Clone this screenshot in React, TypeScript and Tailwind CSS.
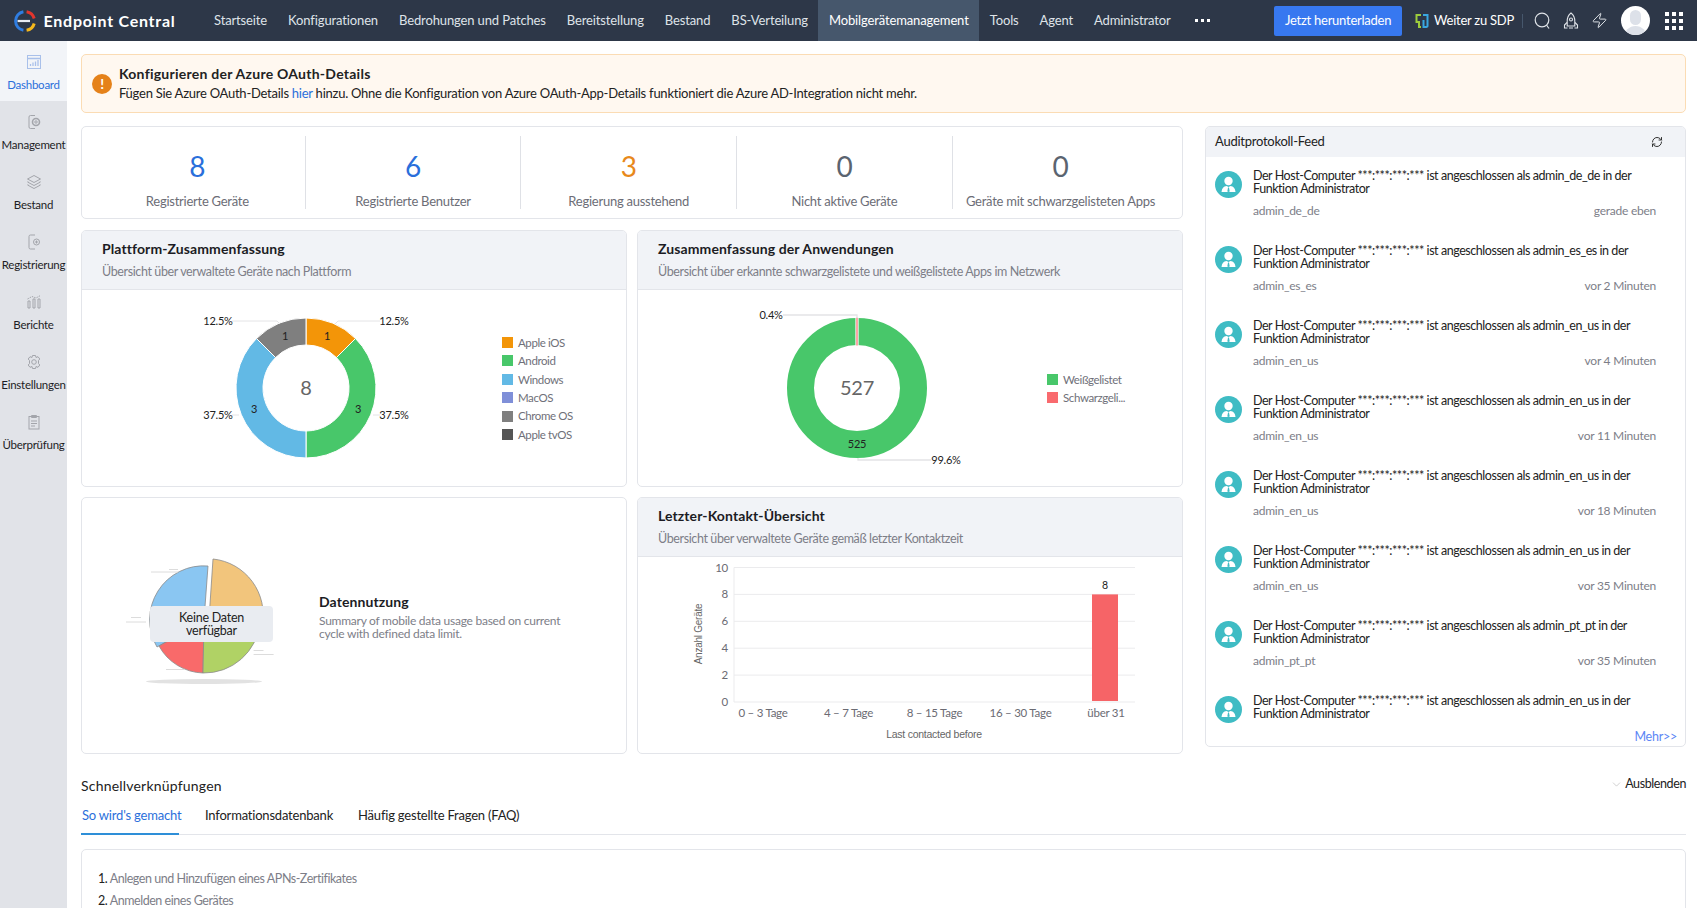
import { RefreshCw, Zap, ChevronDown } from 'lucide-react'

const NAV = ['Startseite', 'Konfigurationen', 'Bedrohungen und Patches', 'Bereitstellung', 'Bestand', 'BS-Verteilung', 'Mobilgerätemanagement', 'Tools', 'Agent', 'Administrator']

const FEED = [
  { user: 'admin_de_de', time: 'gerade eben' },
  { user: 'admin_es_es', time: 'vor 2 Minuten' },
  { user: 'admin_en_us', time: 'vor 4 Minuten' },
  { user: 'admin_en_us', time: 'vor 11 Minuten' },
  { user: 'admin_en_us', time: 'vor 18 Minuten' },
  { user: 'admin_en_us', time: 'vor 35 Minuten' },
  { user: 'admin_pt_pt', time: 'vor 35 Minuten' },
  { user: 'admin_en_us', time: '' },
]

const STATS = [
  { value: '8', label: 'Registrierte Geräte', color: 'text-[#2a6fdb]' },
  { value: '6', label: 'Registrierte Benutzer', color: 'text-[#2a6fdb]' },
  { value: '3', label: 'Regierung ausstehend', color: 'text-[#e8891b]' },
  { value: '0', label: 'Nicht aktive Geräte', color: 'text-[#5b6470]' },
  { value: '0', label: 'Geräte mit schwarzgelisteten Apps', color: 'text-[#5b6470]' },
]

function Logo() {
  return (
    <svg width="23" height="22" viewBox="0 0 23 22" fill="none" className="shrink-0">
      <path d="M3.500 11H16" stroke="#e9edf2" strokeWidth="2.200" />
      <path d="M9.400 20.350 A9.500 9.500 0 0 1 9.400 1.650" stroke="#2f7de1" strokeWidth="3" />
      <path d="M12.600 1.650 A9.500 9.500 0 0 1 20.200 8.500" stroke="#e2352d" strokeWidth="3" />
      <path d="M20.200 13.500 A9.500 9.500 0 0 1 12.600 20.350" stroke="#f5b81c" strokeWidth="3" />
    </svg>
  )
}

function SideIcon({ name, active }: { name: string; active?: boolean }) {
  const s = active ? '#a9c0ea' : '#a3a5ab'
  const common = { width: 20, height: 20, viewBox: '0 0 20 20', fill: 'none', stroke: s, strokeWidth: 1 }
  if (name === 'Dashboard') return (
    <svg {...common}>
      <rect x="3.5" y="3.5" width="13" height="13" />
      <path d="M3.5 6.5H16.5M6.5 14V12M9 14V10.5M11.5 14V9.5M14 14V8" strokeWidth="1.3" />
    </svg>
  )
  if (name === 'Management') return (
    <svg {...common}>
      <path d="M11 3.5H6.5Q5 3.5 5 5V15Q5 16.500 6.500 16.500H11" />
      <circle cx="12" cy="10" r="3.500" strokeWidth="1.600" />
      <circle cx="12" cy="10" r="1.200" />
    </svg>
  )
  if (name === 'Bestand') return (
    <svg {...common}>
      <path d="M10 3.500L16.500 7L10 10.500L3.500 7Z" />
      <path d="M4 9.500L3.500 10L10 13.500L16.500 10L16 9.500" />
      <path d="M4 12.500L3.500 13L10 16.500L16.500 13L16 12.500" />
    </svg>
  )
  if (name === 'Registrierung') return (
    <svg {...common}>
      <path d="M11 3H6.500Q5 3 5 4.500V15.500Q5 17 6.500 17H11" />
      <circle cx="12.500" cy="10" r="3" />
      <path d="M12.500 8.500V11.500M11 10H14" />
    </svg>
  )
  if (name === 'Berichte') return (
    <svg {...common}>
      <path d="M4 16V9H6V16ZM9 16V7H11V16ZM14 16V7H16V16Z" />
      <path d="M3.500 7L8 4.500L12 6L16.500 3.500" strokeDasharray="1.500 1" />
    </svg>
  )
  if (name === 'Einstellungen') return (
    <svg {...common}>
      <path d="M8.500 3.500H11.500L12 5.500L14 4.700L15.800 7L14.500 8.500V11.500L15.800 13L14 15.300L12 14.500L11.500 16.500H8.500L8 14.500L6 15.300L4.200 13L5.500 11.500V8.500L4.200 7L6 4.700L8 5.500Z" />
      <circle cx="10" cy="10" r="2.300" />
    </svg>
  )
  return (
    <svg {...common}>
      <rect x="5" y="4.500" width="10" height="12.500" />
      <path d="M7.500 3.500H12.500V5.500H7.500ZM7 9H13M7 11.500H13M7 14H11" />
    </svg>
  )
}

function Avatar() {
  return (
    <svg width="27" height="27" viewBox="0 0 27 27" className="shrink-0 mt-[2px]">
      <circle cx="13.500" cy="13.500" r="13.500" fill="#3fbcc4" />
      <circle cx="13.500" cy="10" r="4.200" fill="#fff" />
      <path d="M6.500 21 Q7 15.500 11.500 15 L13.500 16 L15.500 15 Q20 15.500 20.500 21 Z" fill="#fff" />
      <path d="M13 16.500 H14 L14.700 20.500 L13.500 21 L12.300 20.500 Z" fill="#3fbcc4" />
    </svg>
  )
}

function CardHead({ title, sub }: { title: string; sub: string }) {
  return (
    <div className="h-[59px] bg-[#f1f3f7] border-b border-[#e3e5ea] pl-[20px] pt-[9px]">
      <h3 className="text-[14px] leading-[18px] font-bold tracking-[0.100px] text-[#1c1c24]">{title}</h3>
      <p className="text-[12.500px] leading-[16px] mt-[6px] tracking-[-0.380px] text-[#7d7e88]">{sub}</p>
    </div>
  )
}

function Legend({ items }: { items: [string, string][] }) {
  return (
    <div className="flex flex-col gap-[4.400px]">
      {items.map(([name, color]) => (
        <div key={name} className="flex items-center gap-[5px] h-[14px] text-[11.500px] tracking-[-0.400px] text-[#6f7079] whitespace-nowrap">
          <span className="w-[11px] h-[11px]" style={{ background: color }} />
          {name}
        </div>
      ))}
    </div>
  )
}

const lead = '#e4e4e6'

function PlatformDonut() {
  // slice angles are worked out from the counts, 8 devices in total
  const cx = 116, cy = 99, R = 70, r = 43
  const slices: [number, number, string][] = [[0, 45, '#f39508'], [45, 180, '#48c76a'], [180, 315, '#62b9e5'], [315, 360, '#7f7f7f']]
  const pt = (rad: number, a: number) => {
    const t = (a * Math.PI) / 180
    return `${(cx + rad * Math.sin(t)).toFixed(2)} ${(cy - rad * Math.cos(t)).toFixed(2)}`
  }
  return (
    <svg width="240" height="198" viewBox="0 1 240 198" className="shrink-0">
      {slices.map(([a, b, c]) => (
        <path key={a} fill={c} stroke="#fff" strokeWidth="1" d={`M${pt(r, a)} L${pt(R, a)} A${R} ${R} 0 0 1 ${pt(R, b)} L${pt(r, b)} A${r} ${r} 0 0 0 ${pt(r, a)} Z`} />
      ))}
      <path d="M42 32H87L90 35M145 35L148 32H190M42 126H49M183 126H190" stroke={lead} fill="none" />
      <g fontSize="11" fill="#222" textAnchor="middle">
        <text x="28" y="36">12.5%</text>
        <text x="204" y="36">12.5%</text>
        <text x="28" y="130">37.5%</text>
        <text x="204" y="130">37.5%</text>
        <text x="95" y="51">1</text>
        <text x="137" y="51">1</text>
        <text x="64" y="124">3</text>
        <text x="168" y="124">3</text>
      </g>
      <text x="116" y="106" fontSize="20" fill="#666" textAnchor="middle">8</text>
    </svg>
  )
}

function AppDonut() {
  return (
    <svg width="240" height="198" viewBox="0 1 240 198" className="shrink-0">
      <circle cx="118" cy="99" r="56.500" fill="none" stroke="#48c76a" strokeWidth="27" />
      <rect x="116.400" y="28.500" width="3.200" height="28" fill="#fff" />
      <rect x="117.400" y="28.500" width="1.200" height="28" fill="#f96a6e" />
      <path d="M44 26H118V29M119 169V171H192" stroke={lead} fill="none" strokeWidth="1.300" />
      <text x="32" y="30" fontSize="11" fill="#222" textAnchor="middle">0.4%</text>
      <text x="207" y="175" fontSize="11" fill="#222" textAnchor="middle">99.6%</text>
      <text x="118" y="159" fontSize="11" fill="#222" textAnchor="middle">525</text>
      <text x="118" y="106" fontSize="20" fill="#666" textAnchor="middle">527</text>
    </svg>
  )
}

function NoDataPie() {
  return (
    <div className="relative w-[167px] h-[132px] shrink-0">
      <svg width="175" height="135" viewBox="0 0 175 135" className="overflow-visible">
        <g stroke="#8a8a8a" strokeWidth="0.800">
          <path d="M57 68 L61 8 A56 56 0 0 1 110 75 Z" fill="#f2c57c" />
          <path d="M52 69 L56 15 A54 54 0 0 0 5 96 Z" fill="#8ac6f2" />
          <path d="M52 70 L51 122 A52 52 0 0 1 7 95 Z" fill="#f96a6a" />
          <path d="M52 70 L108 72 A56 56 0 0 1 51 122 Z" fill="#b0d265" />
        </g>
        <ellipse cx="52" cy="130.500" rx="58" ry="2.500" fill="#e2e2e2" />
        <path d="M-1 21H26M17 18.500H26M-26 71H-6M-21 66.500H-11M101.600 103.500H121.600M101.600 99.500H111.500M14 118.500H32.500" stroke="#dcdcdc" fill="none" />
      </svg>
      <div className="absolute left-[-2px] top-[55px] w-[123px] h-[36px] rounded-[4px] bg-[#e9ecf1] text-[12.500px] leading-[13px] text-[#222] text-center flex items-center justify-center">
        <span>Keine Daten<br />verfügbar</span>
      </div>
    </div>
  )
}

function BarChart() {
  const xs = [762, 847.5, 933.5, 1019.5, 1105].map(x => x - 637)
  const labels = ['0 – 3 Tage', '4 – 7 Tage', '8 – 15 Tage', '16 – 30 Tage', 'über 31']
  const y = (v: number) => 10.500 + (10 - v) * 13.450
  return (
    <svg width="544" height="197" viewBox="0 0 544 197">
      {[10, 8, 6, 4, 2, 0].map(v => (
        <g key={v}>
          <path d={`M96 ${y(v)}H497`} stroke="#ebebed" />
          <text x="90" y={y(v) + 4} fontSize="11.500" fill="#6b6b73" textAnchor="end">{v}</text>
        </g>
      ))}
      <path d={`M96 ${y(10)}V${y(0)}`} stroke="#ebebed" />
      <rect x="454" y={y(8)} width="26" height={y(0) - y(8) - 1} fill="#f66467" />
      <text x="467" y={y(8) - 5} fontSize="10.500" fill="#222" textAnchor="middle">8</text>
      {xs.map((x, i) => (
        <text key={labels[i]} x={x} y="160" fontSize="11.500" fill="#6b6b73" textAnchor="middle">{labels[i]}</text>
      ))}
      <text x="296" y="181" fontSize="10.500" fill="#666" textAnchor="middle" fontFamily="Liberation Sans, sans-serif">Last contacted before</text>
      <text transform="translate(64 77) rotate(-90)" fontSize="10" fill="#666" textAnchor="middle" fontFamily="Liberation Sans, sans-serif">Anzahl Geräte</text>
    </svg>
  )
}

export default function App() {
  return (
    <div className="h-[908px] overflow-hidden bg-white font-['Lato',sans-serif] text-[#222] tracking-[-0.250px]">
      <header className="h-[41px] bg-[#2d3748] flex items-center text-[#dfe3e8] text-[13px]">
        <div className="w-[203.500px] shrink-0 flex items-center gap-[7px] pl-[13.500px]">
          <Logo />
          <span className="text-white font-bold text-[16px] tracking-[0.750px]">Endpoint Central</span>
        </div>
        <nav className="flex h-full tracking-[-0.130px]">
          {NAV.map(n => (
            <a key={n} className={`px-[10.500px] flex items-center whitespace-nowrap ${n === 'Mobilgerätemanagement' ? 'bg-[#46576c] text-white' : ''}`}>{n}</a>
          ))}
        </nav>
        <div className="ml-[14px] flex gap-[3px]">
          <i className="w-[3px] h-[3px] bg-white" /><i className="w-[3px] h-[3px] bg-white" /><i className="w-[3px] h-[3px] bg-white" />
        </div>
        <div className="ml-auto flex items-center pr-[14px]">
          <button className="w-[128px] h-[30px] rounded-[2px] bg-[#3778f0] text-white text-[13px]">Jetzt herunterladen</button>
          <svg width="14" height="16" viewBox="0 0 14 16" fill="none" className="ml-[13px]">
            <path d="M6 2H1.500V9H4V14H6" stroke="#9ccc3c" strokeWidth="2" />
            <path d="M8 2H12.500V13Q12.500 14 10 14H8.500V7" stroke="#39a7e0" strokeWidth="2" />
          </svg>
          <span className="ml-[5px] text-white whitespace-nowrap">Weiter zu SDP</span>
          <span className="ml-[8px] w-px h-[14px] bg-[#46576c]" />
          <svg width="17" height="18" viewBox="0 0 17 18" fill="none" stroke="#dfe3e8" strokeWidth="1.200" className="ml-[11px]">
            <circle cx="8" cy="8" r="6.800" />
            <path d="M12.500 13L15 16.500" />
          </svg>
          <svg width="16" height="18" viewBox="0 0 16 18" fill="none" stroke="#dfe3e8" strokeWidth="1.100" className="ml-[12px]">
            <path d="M8 1Q12 4 11.800 9.500L11.800 14H4.200L4.200 9.500Q4 4 8 1Z" />
            <circle cx="8" cy="7.500" r="1.500" />
            <path d="M4 10.500L1.500 13V16H4.500M12 10.500L14.500 13V16H11.500M6 16H10" />
          </svg>
          <Zap size={17} strokeWidth={1.400} className="ml-[12px] text-[#dfe3e8]" />
          <div className="ml-[13px] w-[29px] h-[29px] rounded-full bg-white overflow-hidden relative">
            <span className="absolute left-[9px] top-[4px] w-[11px] h-[15px] rounded-full bg-[#dde1e9]" />
            <span className="absolute left-[3px] top-[20px] w-[23px] h-[14px] rounded-t-full bg-[#dde1e9]" />
          </div>
          <div className="ml-[15px] grid grid-cols-3 gap-[3px]">
            {Array.from({ length: 9 }).map((_, i) => <i key={i} className="w-[4px] h-[4px] bg-white" />)}
          </div>
        </div>
      </header>

      <div className="flex h-[867px]">
        <aside className="w-[67px] shrink-0 bg-[#e1e3e8]">
          {['Dashboard', 'Management', 'Bestand', 'Registrierung', 'Berichte', 'Einstellungen', 'Überprüfung'].map((n, i) => (
            <div key={n} className={`h-[60px] pt-[11px] flex flex-col items-center gap-[5px] text-[11.500px] leading-[15px] whitespace-nowrap ${i === 0 ? 'bg-[#f2f4f8] text-[#2b6fdb]' : 'text-[#1d1d25]'}`}>
              <SideIcon name={n} active={i === 0} />
              {n}
            </div>
          ))}
        </aside>

        <main className="flex-1 min-w-0 pl-[14px] pr-[11px] pt-[13px]">
          <div className="h-[59px] rounded-[5px] border border-[#fbdcb4] bg-[#fff8f0] flex items-center">
            <span className="ml-[10px] w-[20px] h-[20px] rounded-full bg-[#e5821a] text-white font-bold text-[14px] flex items-center justify-center">!</span>
            <div className="ml-[7px]">
              <p className="text-[14px] leading-[18px] font-bold tracking-[0.250px] text-[#222]">Konfigurieren der Azure OAuth-Details</p>
              <p className="text-[13px] leading-[17px] mt-[2px] text-[#222]">Fügen Sie Azure OAuth-Details <span className="text-[#2b6fdb]">hier</span> hinzu. Ohne die Konfiguration von Azure OAuth-App-Details funktioniert die Azure AD-Integration nicht mehr.</p>
            </div>
          </div>

          <div className="flex gap-[22px] mt-[13px] items-start">
            <div className="w-[1102px] shrink-0">
              <div className="h-[93px] rounded-[5px] border border-[#e3e5ea] grid grid-cols-[repeat(5,215.700px)] pl-[8px] pt-[9px]">
                {STATS.map((s, i) => (
                  <div key={s.label} className={`h-[73px] flex flex-col items-center ${i < 4 ? 'border-r border-[#dfe1e6]' : ''}`}>
                    <span className={`text-[28px] leading-[34px] mt-[13px] ${s.color}`}>{s.value}</span>
                    <span className="text-[13px] leading-[16px] mt-[10px] text-[#6c6d76] whitespace-nowrap">{s.label}</span>
                  </div>
                ))}
              </div>

              <div className="grid grid-cols-2 gap-x-[10px] gap-y-[10px] mt-[11px]">
                <section className="h-[257px] rounded-[5px] border border-[#e3e5ea] overflow-hidden">
                  <CardHead title="Plattform-Zusammenfassung" sub="Übersicht über verwaltete Geräte nach Plattform" />
                  <div className="flex items-center pl-[108px]">
                    <PlatformDonut />
                    <div className="ml-[72px] -mt-[1px]">
                      <Legend items={[['Apple iOS', '#f39508'], ['Android', '#48c76a'], ['Windows', '#62b9e5'], ['MacOS', '#7f8fd8'], ['Chrome OS', '#7f7f7f'], ['Apple tvOS', '#555']]} />
                    </div>
                  </div>
                </section>

                <section className="h-[257px] rounded-[5px] border border-[#e3e5ea] overflow-hidden">
                  <CardHead title="Zusammenfassung der Anwendungen" sub="Übersicht über erkannte schwarzgelistete und weißgelistete Apps im Netzwerk" />
                  <div className="flex items-center pl-[101px]">
                    <AppDonut />
                    <div className="ml-[68px] -mt-[1px]">
                      <Legend items={[['Weißgelistet', '#48c76a'], ['Schwarzgeli...', '#f96a6e']]} />
                    </div>
                  </div>
                </section>

                <section className="h-[257px] rounded-[5px] border border-[#e3e5ea] flex items-center pl-[70px] pb-[18px]">
                  <NoDataPie />
                  <div className="w-[260px]">
                    <h3 className="text-[14px] leading-[18px] font-bold tracking-[0.100px] text-[#1c1c24]">Datennutzung</h3>
                    <p className="text-[12px] leading-[13px] mt-[3px] text-[#7d7e88]">Summary of mobile data usage based on current cycle with defined data limit.</p>
                  </div>
                </section>

                <section className="h-[257px] rounded-[5px] border border-[#e3e5ea] overflow-hidden">
                  <CardHead title="Letzter-Kontakt-Übersicht" sub="Übersicht über verwaltete Geräte gemäß letzter Kontaktzeit" />
                  <BarChart />
                </section>
              </div>
            </div>

            <aside className="flex-1 min-w-0 h-[621px] rounded-[5px] border border-[#e3e5ea] overflow-hidden relative">
              <div className="h-[30px] bg-[#f1f3f7] flex items-center justify-between pl-[9px] pr-[22px] text-[13px] text-[#222]">
                Auditprotokoll-Feed
                <RefreshCw size={12} className="text-[#333]" />
              </div>
              <ul className="pt-[12px] pl-[9px] pr-[29px]">
                {FEED.map((f, i) => (
                  <li key={i} className="h-[75px] flex gap-[11px]">
                    <Avatar />
                    <div className="flex-1 min-w-0">
                      <p className="text-[12.500px] leading-[13px] tracking-[-0.450px] text-[#222]">Der Host-Computer ***:***:***:*** ist angeschlossen als {f.user} in der Funktion Administrator</p>
                      {f.time && (
                        <div className="flex justify-between text-[12px] leading-[16px] mt-[8px] text-[#7d7e88]">
                          <span>{f.user}</span><span>{f.time}</span>
                        </div>
                      )}
                    </div>
                  </li>
                ))}
              </ul>
              <a className="absolute right-[8px] bottom-[1px] text-[12.500px] leading-[16px] text-[#5b86f5]">Mehr&gt;&gt;</a>
            </aside>
          </div>

          <div className="flex items-center justify-between mt-[22px] h-[18px]">
            <h2 className="text-[14px] tracking-[0.200px] text-[#222]">Schnellverknüpfungen</h2>
            <span className="flex items-center gap-[2px] text-[12.500px] tracking-[-0.400px] text-[#222] -mt-[2px]">
              <ChevronDown size={13} strokeWidth={1} className="text-[#aaa]" />Ausblenden
            </span>
          </div>
          <div className="flex mt-[11px] border-b border-[#e3e5ea] h-[30px] text-[13px] tracking-[-0.200px]">
            <a className="w-[98px] pl-[1px] pt-[1px] text-[#2b6fdb] border-b-2 border-[#2e8fd8] h-[30px] whitespace-nowrap">So wird's gemacht</a>
            <a className="ml-[26px] pt-[1px] whitespace-nowrap">Informationsdatenbank</a>
            <a className="ml-[25px] pt-[1px] whitespace-nowrap">Häufig gestellte Fragen (FAQ)</a>
          </div>
          <div className="mt-[14px] h-[120px] rounded-[5px] border border-[#e3e5ea] pl-[16px] pt-[21px] text-[12.500px] leading-[16px] tracking-[-0.450px] text-[#7d7e88]">
            <p><span className="text-[#222]">1.</span> Anlegen und Hinzufügen eines APNs-Zertifikates</p>
            <p className="mt-[6px]"><span className="text-[#222]">2.</span> Anmelden eines Gerätes</p>
          </div>
        </main>
      </div>
    </div>
  )
}
